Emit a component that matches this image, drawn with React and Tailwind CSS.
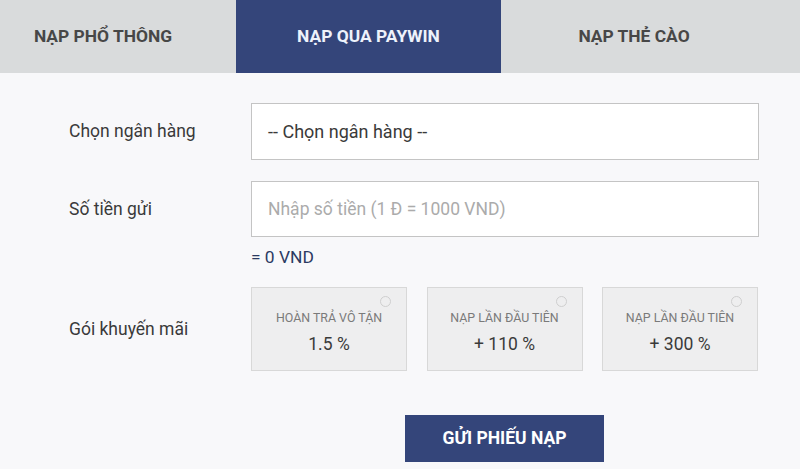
export default function App() {
  const font = { fontFamily: "Roboto, 'Noto Sans', sans-serif" };
  const promos = [
    { t: "HOÀN TRẢ VÔ TẬN", v: "1.5 %" },
    { t: "NẠP LẦN ĐẦU TIÊN", v: "+ 110 %" },
    { t: "NẠP LẦN ĐẦU TIÊN", v: "+ 300 %" },
  ];
  return (
    <div className="w-[800px] h-[469px] bg-[#f8f8fa] overflow-hidden font-['Roboto',sans-serif]" style={font}>
      <div className="flex h-[73px] bg-[#d9dbdc]">
        <div className="w-[236px] flex items-center justify-center pr-[30px] text-[17.4px] font-bold text-[#474747]">NẠP PHỔ THÔNG</div>
        <div className="w-[265px] flex items-center justify-center bg-[#34457a] text-[17.4px] font-bold text-[#eef2fb]">NẠP QUA PAYWIN</div>
        <div className="flex-1 flex items-center justify-center pr-[33px] text-[17.4px] font-bold text-[#474747]">NẠP THẺ CÀO</div>
      </div>
      <div className="pl-[69px] pt-[30px]">
        <div className="flex items-center h-[57px]">
          <div className="w-[182px] text-[17.5px] text-[#3a3a3a]">Chọn ngân hàng</div>
          <div className="w-[508px] h-[57px] border border-[#c4c4c4] bg-white flex items-center pl-[16px] text-[18px] text-[#3a3a3a]">-- Chọn ngân hàng --</div>
        </div>
        <div className="flex items-center h-[56px] mt-[21px]">
          <div className="w-[182px] text-[17.5px] text-[#3a3a3a]">Số tiền gửi</div>
          <div className="w-[508px] h-[56px] border border-[#c4c4c4] bg-white flex items-center pl-[16px] text-[17.5px] text-[#ababab]">Nhập số tiền (1 Đ = 1000 VND)</div>
        </div>
        <div className="ml-[182px] mt-[9px] text-[17.4px] text-[#2b3a62] leading-[22px]">= 0 VND</div>
        <div className="flex items-center mt-[19px]">
          <div className="w-[182px] text-[17.5px] text-[#3a3a3a]">Gói khuyến mãi</div>
          <div className="flex gap-[19.5px]">
            {promos.map((p, i) => (
              <div key={i} className="relative w-[156px] h-[84px] bg-[#eeeeef] border border-[#d8d8d8] flex flex-col items-center pt-[21px]">
                <div className="absolute top-[8px] right-[15px] w-[11px] h-[11px] rounded-full border border-[#cfcfcf]" />
                <div className="text-[12.4px] text-[#7a7a7a] leading-[18px]">{p.t}</div>
                <div className="text-[17.5px] text-[#3a3a3a] leading-[22px] mt-[6px]">{p.v}</div>
              </div>
            ))}
          </div>
        </div>
        <div className="flex mt-[44px] ml-[336px]">
          <div className="w-[199px] h-[47px] bg-[#34457a] flex items-center justify-center text-[17.5px] font-bold text-white">GỬI PHIẾU NẠP</div>
        </div>
      </div>
    </div>
  );
}
